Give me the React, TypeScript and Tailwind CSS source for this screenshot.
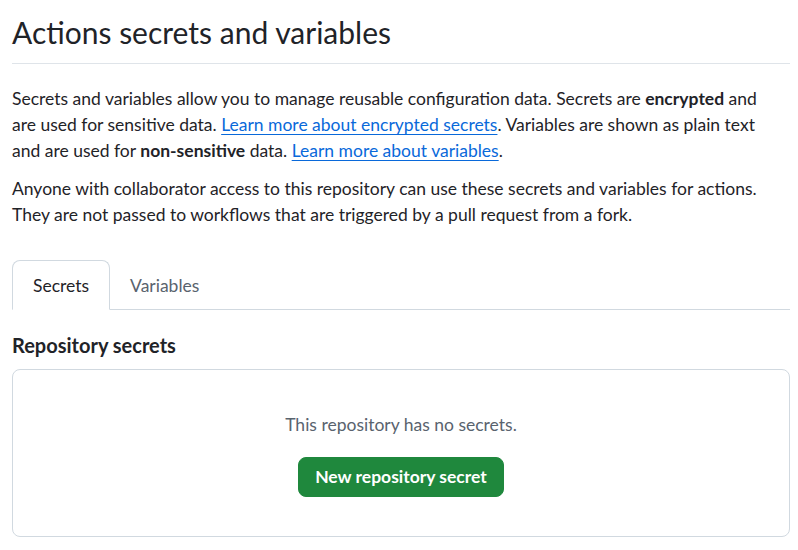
export default function App() {
  return (
    <div className="min-h-screen bg-white pl-3 pr-2 text-[#1f2328]" style={{ fontFamily: 'Lato, "Noto Sans", sans-serif' }}>
      {/* Subhead */}
      <div className="pt-[11px] pb-[10px] border-b border-[#d1d9e0b3]">
        <h1 className="text-[30px] leading-[42px] font-normal">Actions secrets and variables</h1>
      </div>

      {/* Intro */}
      <div className="mt-[22px] text-[17.5px] leading-[26px] whitespace-nowrap">
        <p className="mb-[12px]">
          Secrets and variables allow you to manage reusable configuration data. Secrets are <strong className="font-bold">encrypted</strong> and
          <br />
          are used for sensitive data.{" "}
          <a href="#" className="text-[#0969da] underline underline-offset-[3px]">Learn more about encrypted secrets</a>. Variables are shown as plain text
          <br />
          and are used for <strong className="font-bold">non-sensitive</strong> data.{" "}
          <a href="#" className="text-[#0969da] underline underline-offset-[3px]">Learn more about variables</a>.
        </p>
        <p>
          Anyone with collaborator access to this repository can use these secrets and variables for actions.
          <br />
          They are not passed to workflows that are triggered by a pull request from a fork.
        </p>
      </div>

      {/* Tabs */}
      <div className="mt-[32px] flex border-b border-[#d1d9e0]">
        <button className="-mb-px px-5 h-[50px] pt-[2px] rounded-t-[8px] border border-[#d1d9e0] border-b-white bg-white text-[17.5px] text-[#1f2328]">
          Secrets
        </button>
        <button className="px-5 h-[49px] pt-[3px] text-[17.5px] text-[#59636e]">Variables</button>
      </div>

      {/* Repository secrets */}
      <h2 className="mt-[22px] text-[20px] leading-[26px] font-bold">Repository secrets</h2>
      <div className="mt-[11px] h-[168px] rounded-[8px] border border-[#d1d9e0] flex flex-col items-center pt-[42px]">
        <p className="text-[17.5px] leading-[26px] text-[#59636e]">This repository has no secrets.</p>
        <button className="mt-[19px] h-[40px] px-4 rounded-[8px] bg-[#1f883d] border border-[#1f883d] text-white text-[17.5px] font-bold">
          New repository secret
        </button>
      </div>
    </div>
  );
}
